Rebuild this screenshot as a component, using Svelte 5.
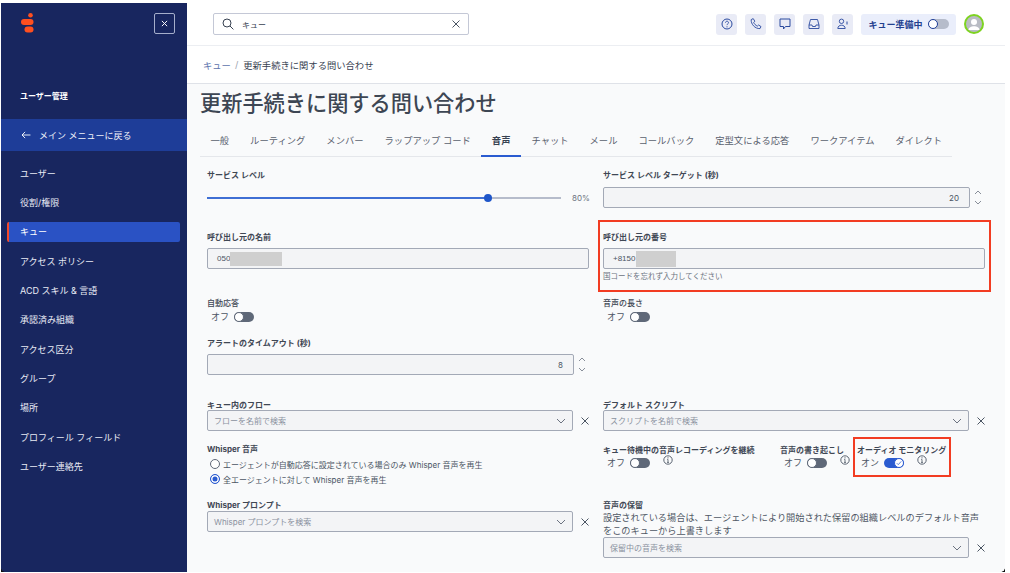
<script>
  const navItems = [
    'ユーザー', '役割/権限', 'キュー', 'アクセス ポリシー', 'ACD スキル & 言語', '承認済み組織',
    'アクセス区分', 'グループ', '場所', 'プロフィール フィールド', 'ユーザー連絡先'
  ];
  const tabs = [
    '一般', 'ルーティング', 'メンバー', 'ラップアップ コード', '音声', 'チャット', 'メール',
    'コールバック', '定型文による応答', 'ワークアイテム', 'ダイレクト'
  ];
</script>

{#snippet chevron()}
  <svg class="chev" viewBox="0 0 10 6" width="10" height="6"><path d="M1 1l4 4 4-4" fill="none" stroke="#6b7280" stroke-width="1"/></svg>
{/snippet}

{#snippet cross()}
  <svg class="cross" viewBox="0 0 8 8" width="8" height="8"><path d="M.5.5l7 7M7.5.5l-7 7" fill="none" stroke="#4b5563" stroke-width="1"/></svg>
{/snippet}

{#snippet spinner()}
  <div class="spinner">
    <svg viewBox="0 0 8 5" width="8" height="5"><path d="M1 4l3-3 3 3" fill="none" stroke="#6b7280" stroke-width=".8"/></svg>
    <svg viewBox="0 0 8 5" width="8" height="5"><path d="M1 1l3 3 3-3" fill="none" stroke="#6b7280" stroke-width=".8"/></svg>
  </div>
{/snippet}

{#snippet info()}
  <svg class="info" viewBox="0 0 10 10" width="10" height="10">
    <circle cx="5" cy="5" r="4.2" fill="none" stroke="#4b5563" stroke-width=".9"/>
    <path d="M5 4.4v3M4 7.4h2M4.2 4.4H5" fill="none" stroke="#4b5563" stroke-width=".8"/>
    <circle cx="5" cy="2.8" r=".6" fill="#4b5563"/>
  </svg>
{/snippet}

{#snippet toggleOff()}
  <div class="switch-row"><span>オフ</span><span class="switch"><i></i></span></div>
{/snippet}

{#snippet selectBox(placeholder)}
  <div class="select-row">
    <div class="box select"><span>{placeholder}</span>{@render chevron()}</div>
    {@render cross()}
  </div>
{/snippet}

<div class="page">
  <aside class="sidebar">
    <div class="side-top">
      <svg class="logo" viewBox="0 0 13 20" width="13" height="20">
        <circle cx="9.5" cy="2.3" r="2.3" fill="#ff4f1f"/>
        <rect x="0" y="6" width="12.5" height="6" rx="3" fill="#ff4f1f"/>
        <rect x="3.5" y="13.6" width="9" height="6" rx="3" fill="#ff4f1f"/>
      </svg>
      <button class="close" aria-label="閉じる">
        <svg viewBox="0 0 8 8" width="7" height="7"><path d="M1 1l6 6M7 1L1 7" fill="none" stroke="#fff" stroke-width="1.1"/></svg>
      </button>
    </div>
    <div class="side-title">ユーザー管理</div>
    <div class="back">
      <svg viewBox="0 0 11 9" width="10" height="8"><path d="M10.5 4.5H1M4.5 1L1 4.5 4.5 8" fill="none" stroke="#fff" stroke-width="1"/></svg>
      <span>メイン メニューに戻る</span>
    </div>
    <nav>
      {#each navItems as item}
        <div class="nav-item" class:active={item === 'キュー'}>{item}</div>
      {/each}
    </nav>
  </aside>

  <div class="main">
    <header class="topbar">
      <div class="search">
        <svg viewBox="0 0 12 12" width="12" height="12"><circle cx="5" cy="5" r="4" fill="none" stroke="#374151" stroke-width="1"/><path d="M8 8l3.4 3.4" stroke="#374151" stroke-width="1"/></svg>
        <span class="search-text">キュー</span>
        <svg viewBox="0 0 8 8" width="8" height="8"><path d="M.5.5l7 7M7.5.5l-7 7" fill="none" stroke="#4b5563" stroke-width="1"/></svg>
      </div>
      <div class="tools">
        <div class="tool"><svg viewBox="0 0 12 12" width="12" height="12"><circle cx="6" cy="6" r="5" fill="none" stroke="#2a4a9f" stroke-width="1"/><path d="M4.5 4.7c0-2 3-2 3 0 0 1.2-1.5 1.2-1.5 2.4" fill="none" stroke="#2a4a9f" stroke-width=".9"/><circle cx="6" cy="8.8" r=".6" fill="#2a4a9f"/></svg></div>
        <div class="tool"><svg viewBox="0 0 12 12" width="12" height="12"><path d="M1.2 1.6l2-1 1.6 2.6-1.1 1.2c.6 1.6 1.9 3 3.7 3.7l1.2-1.1 2.4 1.6-1 2c-5 .3-9.2-4.500-8.800-9z" fill="none" stroke="#2a4a9f" stroke-width=".9"/></svg></div>
        <div class="tool"><svg viewBox="0 0 12 12" width="12" height="12"><path d="M1 1h10v7.500H6.500L4.500 11V8.500H1z" fill="none" stroke="#2a4a9f" stroke-width="1"/></svg></div>
        <div class="tool"><svg viewBox="0 0 12 12" width="12" height="12"><path d="M1 7l1.500-5.500h7L11 7v3.500H1zM1 7h3l.5 1.500h3L8 7h3" fill="none" stroke="#2a4a9f" stroke-width=".9"/></svg></div>
        <div class="tool"><svg viewBox="0 0 12 12" width="12" height="12"><circle cx="4.500" cy="3.300" r="2.200" fill="none" stroke="#2a4a9f" stroke-width=".9"/><path d="M.8 10.500c0-4.400 7.400-4.400 7.400 0z" fill="none" stroke="#2a4a9f" stroke-width=".9"/><path d="M10 3.500v3" stroke="#2a4a9f" stroke-width="1"/></svg></div>
        <div class="status">
          <span>キュー準備中</span>
          <span class="status-switch"><i></i></span>
        </div>
        <div class="avatar">
          <svg viewBox="0 0 16 16" width="16" height="16"><circle cx="8" cy="6" r="3" fill="#fff"/><path d="M2.500 14c0-5 11-5 11 0z" fill="#fff"/></svg>
        </div>
      </div>
    </header>

    <div class="crumbs"><a href="#q">キュー</a><em>/</em><span>更新手続きに関する問い合わせ</span></div>

    <section class="content">
      <h1>更新手続きに関する問い合わせ</h1>
      <div class="tabs">
        {#each tabs as tab}
          <div class="tab" class:current={tab === '音声'}>{tab}</div>
        {/each}
      </div>

      <div class="form">
        <div class="field r1">
          <div class="label">サービス レベル</div>
          <div class="slider">
            <div class="track"><b></b><i></i></div>
            <span>80%</span>
          </div>
        </div>
        <div class="field r1">
          <div class="label">サービス レベル ターゲット (秒)</div>
          <div class="num-row">
            <div class="box num">20</div>
            {@render spinner()}
          </div>
        </div>

        <div class="field r2">
          <div class="label">呼び出し元の名前</div>
          <div class="box text"><span>050</span><i class="mask wide"></i></div>
        </div>
        <div class="field r2 marked">
          <div class="redbox"></div>
          <div class="label">呼び出し元の番号</div>
          <div class="box text"><span>+8150</span><i class="mask"></i></div>
          <div class="hint">国コードを忘れず入力してください</div>
        </div>

        <div class="field r3">
          <div class="label light">自動応答</div>
          {@render toggleOff()}
        </div>
        <div class="field r3">
          <div class="label light">音声の長さ</div>
          {@render toggleOff()}
        </div>

        <div class="field r4">
          <div class="label">アラートのタイムアウト (秒)</div>
          <div class="num-row short">
            <div class="box num">8</div>
            {@render spinner()}
          </div>
        </div>
        <div class="field r4"></div>

        <div class="field r5">
          <div class="label">キュー内のフロー</div>
          {@render selectBox('フローを名前で検索')}
        </div>
        <div class="field r5">
          <div class="label">デフォルト スクリプト</div>
          {@render selectBox('スクリプトを名前で検索')}
        </div>

        <div class="field r6">
          <div class="label">Whisper 音声</div>
          <div class="radio"><i></i>エージェントが自動応答に設定されている場合のみ Whisper 音声を再生</div>
          <div class="radio on"><i></i>全エージェントに対して Whisper 音声を再生</div>
        </div>
        <div class="field r6 toggles">
          <div class="tg tg1">
            <div class="label">キュー待機中の音声レコーディングを継続</div>
            <div class="tg-line">{@render toggleOff()}{@render info()}</div>
          </div>
          <div class="tg tg2">
            <div class="label">音声の書き起こし</div>
            <div class="tg-line">{@render toggleOff()}{@render info()}</div>
          </div>
          <div class="tg tg3">
            <div class="redbox"></div>
            <div class="label">オーディオ モニタリング</div>
            <div class="tg-line">
              <div class="switch-row"><span>オン</span>
                <span class="switch on"><i><svg viewBox="0 0 8 8" width="6" height="6"><path d="M1 4.200l2 2 4-4.400" fill="none" stroke="#2a5bd0" stroke-width="1"/></svg></i></span>
              </div>
              {@render info()}
            </div>
          </div>
        </div>

        <div class="field r7">
          <div class="label">Whisper プロンプト</div>
          {@render selectBox('Whisper プロンプトを検索')}
        </div>
        <div class="field r7">
          <div class="label">音声の保留</div>
          <p class="desc">設定されている場合は、エージェントにより開始された保留の組織レベルのデフォルト音声をこのキューから上書きします</p>
          {@render selectBox('保留中の音声を検索')}
        </div>
      </div>
    </section>
  </div>
  <div class="corner left"></div>
  <div class="corner right"></div>
</div>

<style>
  :global(body) {
    margin: 0;
    background: #fff;
  }

  .page {
    position: relative;
    display: flex;
    width: 1010px;
    height: 573px;
    overflow: hidden;
    padding: 3px 0 1px 1px;
    box-sizing: border-box;
    font-family: Inter, "Noto Sans CJK JP", sans-serif;
    color: #374151;
  }

  .corner {
    position: absolute;
    bottom: 1px;
    width: 4px;
    height: 4px;
  }

  .corner.left {
    left: 1px;
    background: radial-gradient(circle at 100% 0, transparent 3.5px, #111 4px);
  }

  .corner.right {
    right: 5px;
    background: radial-gradient(circle at 0 0, transparent 3.5px, #111 4px);
  }

  .sidebar {
    width: 186px;
    flex: none;
    background: #18265f;
    color: #e8ebf5;
    font-size: 9px;
  }

  .side-top {
    display: flex;
    justify-content: space-between;
    align-items: flex-start;
    padding: 10px 12px 0 20px;
    height: 50px;
  }

  .close {
    width: 21px;
    height: 21px;
    padding: 0;
    display: flex;
    align-items: center;
    justify-content: center;
    background: none;
    border: 1px solid #a5aecb;
    border-radius: 2px;
  }

  .side-title {
    margin-top: 27px;
    padding-left: 19px;
    font-size: 8px;
    font-weight: 700;
    color: #fff;
    line-height: 12px;
  }

  .back {
    margin-top: 17px;
    height: 32px;
    background: #1e3d98;
    display: flex;
    align-items: center;
    gap: 8px;
    padding-left: 20px;
    color: #eef1f9;
  }

  nav {
    margin-top: 8px;
    display: flex;
    flex-direction: column;
  }

  .nav-item {
    height: 29.3px;
    line-height: 29.3px;
    padding-left: 19px;
    font-size: 9px;
  }

  .nav-item.active {
    margin: 4.7px 7px 4.6px 6px;
    padding-left: 11px;
    height: 20px;
    line-height: 20px;
    background: #2a52c4;
    border-left: 2px solid #f2492a;
    border-radius: 2px;
    color: #fff;
  }

  .main {
    flex: 1;
    display: flex;
    flex-direction: column;
    min-width: 0;
    margin-right: 5px;
  }

  .topbar {
    height: 42px;
    flex: none;
    display: flex;
    align-items: center;
    justify-content: space-between;
    padding: 0 21px 0 26px;
    border-bottom: 1px solid #eceef2;
  }

  .search {
    width: 238px;
    height: 20px;
    border: 1px solid #c4c8d6;
    border-radius: 2px;
    display: flex;
    align-items: center;
    padding: 0 8px;
    box-sizing: content-box;
    font-size: 8px;
  }

  .search-text {
    flex: 1;
    padding-left: 8px;
  }

  .tools {
    display: flex;
    align-items: center;
    gap: 8px;
  }

  .tool {
    width: 21px;
    height: 21px;
    background: #e9ebf6;
    border-radius: 3px;
    display: flex;
    align-items: center;
    justify-content: center;
  }

  .status {
    height: 21px;
    width: 95px;
    box-sizing: border-box;
    background: #eaeefb;
    border-radius: 3px;
    display: flex;
    align-items: center;
    justify-content: center;
    gap: 5px;
    font-size: 9px;
    font-weight: 700;
    color: #23408f;
  }

  .status-switch {
    width: 21px;
    height: 10px;
    background: #b6bccb;
    border-radius: 5px;
    position: relative;
  }

  .status-switch i {
    position: absolute;
    left: 0;
    top: 0;
    width: 10px;
    height: 10px;
    box-sizing: border-box;
    background: #fff;
    border: 1.5px solid #1f3f99;
    border-radius: 50%;
  }

  .avatar {
    width: 16px;
    height: 16px;
    border: 2px solid #7ed321;
    border-radius: 50%;
    background: #b9bcc4;
    overflow: hidden;
  }

  .crumbs {
    height: 37px;
    flex: none;
    display: flex;
    align-items: center;
    padding-left: 16px;
    font-size: 9.3px;
    border-bottom: 1px solid #dfe2e8;
  }

  .crumbs a {
    color: #5d73ad;
    text-decoration: none;
  }

  .crumbs em {
    font-style: normal;
    margin: 0 5px 0 4px;
    color: #9ca3af;
  }

  .content {
    flex: 1;
    background: #f9fafb;
    min-height: 0;
    overflow: hidden;
    padding: 0 0 0 20px;
  }

  h1 {
    margin: 4px 0 0 -7px;
    font-size: 21.2px;
    font-weight: 500;
    line-height: 30px;
    color: #3d4653;
  }

  .tabs {
    display: flex;
    margin: 8px 0 0 -7px;
    width: 752px;
    height: 31px;
    border-bottom: 1px solid #e5e7eb;
    box-sizing: border-box;
    font-size: 9.3px;
    color: #59616e;
  }

  .tab {
    padding: 0 10.5px;
    line-height: 30px;
    position: relative;
    white-space: nowrap;
  }

  .tab.current {
    font-weight: 700;
    color: #374151;
  }

  .tab.current::after {
    content: '';
    position: absolute;
    left: 0;
    right: 0;
    bottom: -1px;
    height: 2px;
    background: #2a5bd0;
  }

  .form {
    display: grid;
    grid-template-columns: 382px 382px;
    column-gap: 14px;
    grid-auto-rows: max-content;
    font-size: 8.5px;
  }

  .field {
    position: relative;
    min-width: 0;
    box-sizing: border-box;
  }

  .r1 { height: 73px; padding-top: 12px; }
  .r2 { height: 67px; padding-top: 1px; }
  .r3 { height: 40px; }
  .r4 { height: 67px; }
  .r5 { height: 39px; }
  .r6 { height: 56px; }
  .r7 { height: 60px; }

  .label {
    font-size: 8px;
    line-height: 12px;
    font-weight: 700;
    color: #3f4754;
    white-space: nowrap;
  }

  .label.light {
    font-weight: 500;
  }

  .box {
    height: 21px;
    box-sizing: border-box;
    background: #f3f4f6;
    border: 1px solid #a3a9b6;
    border-radius: 2px;
    display: flex;
    align-items: center;
    color: #4b5563;
    font-size: 8px;
  }

  .num-row {
    display: flex;
    align-items: center;
    gap: 4px;
    width: 382px;
    margin-top: 6px;
  }

  .r4 .num-row {
    margin-top: 5px;
  }

  .num-row .box {
    width: 367px;
    flex: none;
  }

  .num {
    justify-content: flex-end;
    padding-right: 10px;
  }

  .spinner {
    display: flex;
    flex-direction: column;
    gap: 5px;
  }

  .slider {
    display: flex;
    align-items: center;
    margin-top: 12px;
    height: 10px;
    font-size: 8px;
    color: #6b7280;
  }

  .track {
    width: 354px;
    height: 1.5px;
    background: #b6bccb;
    position: relative;
    flex: none;
  }

  .track b {
    position: absolute;
    left: 0;
    top: 0;
    height: 100%;
    width: 79%;
    background: #3f6fd4;
  }

  .track i {
    position: absolute;
    left: 276.5px;
    top: -3px;
    width: 8px;
    height: 8px;
    border-radius: 50%;
    background: #1f56c9;
  }

  .slider span {
    margin-left: 11px;
  }

  .text {
    padding-left: 9px;
    margin-top: 5px;
    font-family: "Liberation Sans", sans-serif;
  }

  .mask {
    display: block;
    height: 14px;
    width: 52px;
    background: #cfcfcf;
    flex: none;
  }

  .marked .text {
    padding-left: 9px;
  }

  .marked .mask {
    width: 40px;
    height: 16px;
    margin-left: 1px;
  }

  .redbox {
    position: absolute;
    border: 2px solid #f23c22;
    box-sizing: border-box;
    pointer-events: none;
  }

  .marked .redbox {
    left: -5px;
    right: -6px;
    top: -10px;
    height: 72px;
  }

  .hint {
    margin-top: 2px;
    font-size: 7.5px;
    line-height: 11px;
    color: #6b7280;
  }

  .switch-row {
    display: flex;
    align-items: center;
    gap: 5px;
    margin: 3px 0 0 4px;
    font-size: 9px;
    line-height: 10px;
    color: #4b5563;
  }

  .tg-line .switch-row {
    margin-top: 2px;
  }

  .switch {
    width: 20px;
    height: 10px;
    border-radius: 5px;
    background: #5f6878;
    position: relative;
    display: inline-block;
  }

  .switch i {
    position: absolute;
    left: 0;
    top: 0;
    width: 10px;
    height: 10px;
    box-sizing: border-box;
    background: #fff;
    border: 1px solid #5f6878;
    border-radius: 50%;
    display: flex;
    align-items: center;
    justify-content: center;
  }

  .switch.on {
    background: #2a5bd0;
  }

  .switch.on i {
    left: 10px;
    border-color: #2a5bd0;
  }

  .select-row {
    display: flex;
    align-items: center;
    gap: 8px;
  }

  .select {
    width: 366px;
    flex: none;
    justify-content: space-between;
    padding: 0 6px;
    color: #8a919e;
    font-size: 8px;
  }

  .r5 .label {
    line-height: 9px;
    margin-top: -3px;
  }

  .radio {
    display: flex;
    align-items: center;
    gap: 3px;
    margin: 3px 0 0 3px;
    height: 12px;
    font-size: 8px;
    color: #4b5563;
    white-space: nowrap;
  }

  .radio i {
    width: 10px;
    height: 10px;
    box-sizing: border-box;
    border: 1px solid #5f6878;
    border-radius: 50%;
    background: #fff;
    flex: none;
  }

  .radio.on i {
    border-color: #2a5bd0;
    background: #2a5bd0;
    box-shadow: inset 0 0 0 1.5px #fff;
  }

  .toggles {
    display: flex;
    padding-top: 1px;
  }

  .tg1 { width: 177px; }
  .tg2 { width: 76px; }
  .tg3 { padding-left: 1px; position: relative; }

  .tg-line {
    display: flex;
    align-items: flex-start;
    gap: 13px;
  }

  .info {
    margin-top: -1px;
    flex: none;
  }

  .tg3 .redbox {
    left: -3px;
    top: -7px;
    width: 98px;
    height: 40px;
  }

  .desc {
    margin: 0;
    width: 382px;
    font-size: 9.2px;
    line-height: 13px;
    color: #4f5764;
  }
</style>
